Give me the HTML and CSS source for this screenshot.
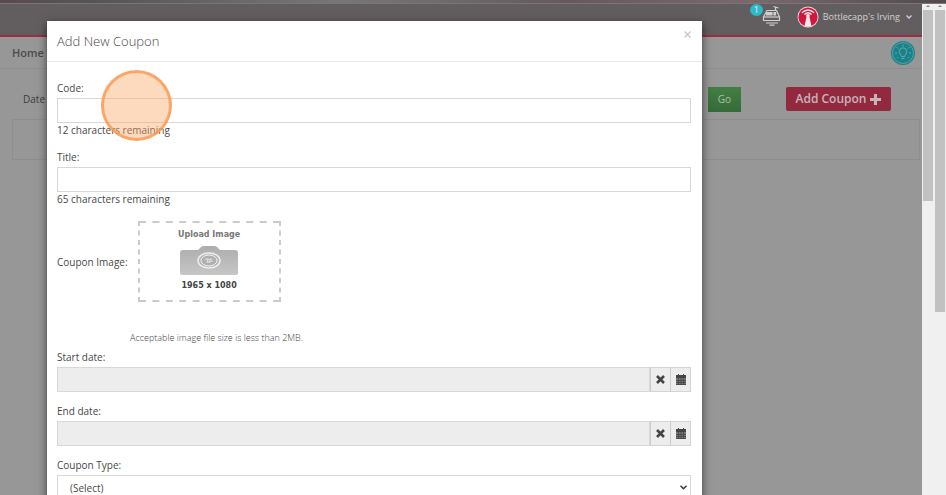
FILE: index.html
```html
<!DOCTYPE html>
<html lang="en">
<head>
<meta charset="utf-8">
<title>Add New Coupon</title>
<link rel="stylesheet" href="styles.css">
</head>
<body>
<div class="strip"></div>
<div class="frame">
  <div class="page">
    <header class="topbar">
      <a class="register" href="#" aria-label="Orders">
        <svg width="20" height="21" viewBox="0 0 20 21" fill="none" stroke="#d2d0d1" stroke-width="1.200">
          <path d="M5 5.500h9.500l3 6.500v3.500H1.500V12z"/><path d="M1.500 12h16"/><path d="M5 7.500h5v2.500H4.500zM12 7.500h1.500v2.500H12z" fill="#d2d0d1"/><path d="M13.500 5V2.500M11.500 1.500l5 1.500"/><path d="M4 18h12M7.500 20.200h5"/>
        </svg>
        <span class="count">1</span>
      </a>
      <a class="account" href="#">
        <svg width="22" height="22" viewBox="0 0 22 22">
          <circle cx="11" cy="11" r="10.500" fill="#dedada"/><circle cx="11" cy="11" r="9.600" fill="#d5163c"/>
          <path d="M9.700 10h2.600l2.200 10q-3.500 1.500-7 0z" fill="#f3e9eb"/><circle cx="11" cy="9.500" r="1.700" fill="#f3e9eb"/>
          <path d="M7.500 8.500q3.500-3.500 7 0M5 6.700q6-5.500 12 0" fill="none" stroke="#f3e9eb" stroke-width="1.400"/>
        </svg>
        <span class="name">Bottlecapp's Irving</span>
        <svg width="6" height="4" viewBox="0 0 6 4" fill="none" stroke="#d2d0d1" stroke-width="1.300"><path d="M.5.5 3 3 5.500.5"/></svg>
      </a>
    </header>
    <nav class="crumbs">
      <a class="home" href="#">Home</a>
      <button class="tip" type="button" aria-label="Tips">
        <svg width="24" height="24" viewBox="0 0 24 24" fill="none" stroke="#6fa6aa">
          <circle cx="12" cy="12" r="12" fill="#18838a" stroke="none"/><circle cx="12" cy="12" r="10.500" stroke-width=".8"/>
          <path d="M10.300 15.500c0-2-2-2.500-2-5a3.700 3.700 0 0 1 7.400 0c0 2.500-2 3-2 5zM10.500 17.500h3M12 3.500v2M5.500 6l1.500 1.500M18.500 6 17 7.500M4 12h2M18 12h2M6 17l1-1M18 17l-1-1"/>
        </svg>
      </button>
    </nav>
    <div class="filters">
      <span class="date">Date</span>
      <button class="go" type="button">Go</button>
      <button class="add" type="button">Add Coupon
        <svg width="11" height="11" viewBox="0 0 11 11"><path d="M4 0h3v4h4v3H7v4H4V7H0V4h4z" fill="#c7b5b9"/></svg>
      </button>
    </div>
    <div class="panel"></div>

    <section class="modal" role="dialog" aria-labelledby="modal-title">
      <div class="modal-head">
        <h1 id="modal-title">Add New Coupon</h1>
        <button class="close" type="button" aria-label="Close">
          <svg width="7" height="7" viewBox="0 0 7 7" stroke="#c4c4c4" stroke-width="1.100"><path d="M.5.5l6 6M6.500.5l-6 6"/></svg>
        </button>
      </div>
      <form class="modal-body">
        <div class="field">
          <label for="code">Code:</label>
          <input class="control" id="code" type="text" maxlength="12">
          <span class="help">12 characters remaining</span>
          <span class="pointer"></span>
        </div>
        <div class="field">
          <label for="title">Title:</label>
          <input class="control" id="title" type="text" maxlength="65">
          <span class="help">65 characters remaining</span>
        </div>
        <div class="image-row">
          <span>Coupon Image:</span>
          <button class="upload" type="button">
            <svg class="dashes" width="143" height="81" viewBox="0 0 143 81" fill="none" stroke="#cbcbcb" stroke-width="2">
              <path d="M1 1h141M1 80h141" stroke-dasharray="7 6.400" stroke-dashoffset="0"/><path d="M1 0v81M142 0v81" stroke-dasharray="5 4.500" stroke-dashoffset="0"/>
            </svg>
            <span class="upload-title">Upload Image</span>
            <svg width="58" height="30" viewBox="0 0 58 30">
              <defs><linearGradient id="cam" x2="0" y2="1"><stop stop-color="#adadad"/><stop offset="1" stop-color="#c6c6c6"/></linearGradient></defs>
              <path d="M3 4h15l3-3q1-1 3-1h10q2 0 3 1l3 3h15q3 0 3 3v20q0 2-3 2H3q-3 0-3-2V7q0-3 3-3z" fill="url(#cam)"/>
              <ellipse cx="29" cy="14.500" rx="11" ry="7.500" fill="#b5b5b5" stroke="#eee" stroke-width="1.500"/>
              <ellipse cx="29" cy="14.500" rx="8" ry="5.500" fill="#b0b0b0" stroke="#f4f4f4" stroke-width="1"/>
              <path d="M25 13l7 1M27 17l1-5M33 15l-6 1M31 12l-2 5" stroke="#eee" stroke-width=".7"/>
            </svg>
            <span class="upload-size">1965 x 1080</span>
          </button>
        </div>
        <p class="hint">Acceptable image file size is less than 2MB.</p>
        <div class="field">
          <label for="start">Start date:</label>
          <div class="date-group">
            <input class="control" id="start" type="text" readonly>
            <button type="button" aria-label="Clear start date"><svg width="9" height="9" viewBox="0 0 9 9" stroke="#444" stroke-width="2.600"><path d="M1 1l7 7M8 1 1 8"/></svg></button>
            <button type="button" aria-label="Pick start date"><svg width="10" height="11" viewBox="0 0 10 11"><path d="M0 1h10v10H0z" fill="#777"/><path d="M0 1h10v3H0zM2 0h1v2H2zM7 0h1v2H7z" fill="#444"/><path d="M0 6.500h10M0 8.500h10M0 10.500h10M2.500 4v7M5 4v7M7.500 4v7" stroke="#444" stroke-width=".8"/></svg></button>
          </div>
        </div>
        <div class="field">
          <label for="end">End date:</label>
          <div class="date-group">
            <input class="control" id="end" type="text" readonly>
            <button type="button" aria-label="Clear end date"><svg width="9" height="9" viewBox="0 0 9 9" stroke="#444" stroke-width="2.600"><path d="M1 1l7 7M8 1 1 8"/></svg></button>
            <button type="button" aria-label="Pick end date"><svg width="10" height="11" viewBox="0 0 10 11"><path d="M0 1h10v10H0z" fill="#777"/><path d="M0 1h10v3H0zM2 0h1v2H2zM7 0h1v2H7z" fill="#444"/><path d="M0 6.500h10M0 8.500h10M0 10.500h10M2.500 4v7M5 4v7M7.500 4v7" stroke="#444" stroke-width=".8"/></svg></button>
          </div>
        </div>
        <div class="field">
          <label for="type">Coupon Type:</label>
          <div class="select-wrap">
            <select class="control" id="type"><option>(Select)</option></select>
            <svg class="caret" width="7" height="5" viewBox="0 0 7 5" fill="none" stroke="#333" stroke-width="1.500"><path d="M.5.700l3 3 3-3"/></svg>
          </div>
        </div>
      </form>
    </section>
  </div>
  <div class="scroll"><i class="arrow"></i><div class="thumb short"></div></div>
  <div class="scroll"><i class="arrow"></i><div class="thumb long"></div></div>
</div>
</body>
</html>
```
FILE: styles.css
```css
* { box-sizing: border-box; }
body {
  margin: 0;
  height: 100vh;
  display: flex;
  flex-direction: column;
  overflow: hidden;
  background: #f0f0f0;
  color: #484848;
  font: 10px/20px "Open Sans", sans-serif;
}
button, input, select { font: inherit; color: inherit; border-radius: 0; margin: 0; }
button { border: 0; padding: 0; background: none; }
a { color: inherit; text-decoration: none; }
svg { display: block; flex: none; }

.strip {
  height: 4px;
  flex: none;
  background: linear-gradient(90deg, #5b4a4d, #555 10%, #777 36%, #65595d 60%, #7a686e 80%, #514a4c);
  border-bottom: 1px solid #77777a;
}
.frame { flex: 1; min-height: 0; display: grid; grid-template-columns: 1fr 12px 12px; }
.page { position: relative; overflow: hidden; background: #979797; }

.topbar {
  height: 33px;
  display: flex;
  justify-content: flex-end;
  gap: 15px;
  padding-right: 10px;
  background: #625e60;
  border-bottom: 2px solid #a02c43;
  color: #d2d0d1;
}
.register { position: relative; padding-top: 1px; }
.count {
  position: absolute;
  left: -12px;
  top: 0;
  width: 13px;
  height: 12px;
  border-radius: 50%;
  background: #2cb9c8;
  color: #e4f4f6;
  font-size: 9px;
  line-height: 12px;
  text-align: center;
}
.account { display: flex; align-items: center; gap: 4px; height: 26px; }
.name { font-size: 9px; margin-right: 2px; }

.crumbs {
  height: 32px;
  display: flex;
  align-items: center;
  justify-content: space-between;
  padding: 0 7px 0 12px;
  border-bottom: 1px solid #8b8e92;
}
.home { font-size: 11px; font-weight: 600; color: #4b4b4b; }
.filters { display: flex; align-items: center; height: 50px; padding: 10px 31px 0 23px; color: #3c3c3c; }
.date { flex: 1; }
.go { width: 33px; height: 25px; background: linear-gradient(#437f45, #356b38); color: #adc0ad; }
.add {
  display: flex;
  align-items: center;
  justify-content: center;
  gap: 4px;
  width: 105px;
  height: 24px;
  margin-left: 45px;
  border-radius: 2px;
  background: #93293f;
  color: #c7b5b9;
  font-size: 12px;
  font-weight: 600;
}
.panel { height: 41px; margin: 0 2px 0 12px; border: 1px solid #8e8e8e; }

.modal {
  position: absolute;
  top: 17px;
  left: 47px;
  right: 220px;
  background: #fff;
  box-shadow: 0 3px 9px rgba(0, 0, 0, .6);
}
.modal-head {
  display: flex;
  justify-content: space-between;
  height: 41px;
  padding: 10px 11px 10px 10px;
  border-bottom: 1px solid #e8e8e8;
}
.modal-head h1 { margin: 0; font-size: 13px; font-weight: 300; line-height: 20px; }
.close { height: 7px; }
.modal-body { padding: 16px 11px 16px 10px; }

.field { position: relative; display: flex; flex-direction: column; margin-bottom: 9px; }
.control {
  width: 100%;
  height: 25px;
  padding: 0 12px;
  border: 1px solid #d8d8d8;
  background: #fff;
  outline: 0;
}
.control[readonly] { background: #ededed; }
.help { line-height: 15px; }
.pointer {
  position: absolute;
  left: 44px;
  top: -8px;
  width: 71px;
  height: 71px;
  border: 3px solid rgba(250, 152, 80, .8);
  border-radius: 50%;
  background: rgba(250, 165, 100, .42);
  pointer-events: none;
}

.image-row { display: flex; align-items: center; gap: 10px; padding-top: 5px; }
.upload {
  position: relative;
  display: flex;
  flex-direction: column;
  align-items: center;
  width: 143px;
  height: 81px;
  padding-top: 6px;
  font-family: "DejaVu Sans", sans-serif;
  font-size: 8px;
  font-weight: 700;
  line-height: 15px;
}
.upload-title { color: #777; line-height: 15px; margin-bottom: 4px; }
.upload-size { color: #444; line-height: 19px; }
.dashes { position: absolute; inset: 0; }
.hint { margin: 27px 0 0 73px; font-size: 9px; font-weight: 300; line-height: 18px; color: #444; }
.date-group { display: flex; }
.date-group .control { flex: 1; min-width: 0; }
.date-group button {
  display: flex;
  align-items: center;
  justify-content: center;
  width: 20px;
  height: 25px;
  border: 1px solid #d4d4d4;
  border-left-color: #ccc;
  border-right: 0;
  background: #ededed;
}
.date-group button:last-child { width: 21px; border-right: 1px solid #d4d4d4; }
.select-wrap { position: relative; }
select.control { appearance: none; display: block; }
.caret { position: absolute; right: 4px; top: 10px; pointer-events: none; }

.scroll { padding: 1px 1px 0; background: #f0f0f0; }
.arrow {
  display: block;
  width: 0;
  margin: 0 auto 3px;
  border: 2px solid transparent;
  border-top: 0;
  border-bottom-color: #888;
}
.thumb { background: #c1c1c1; }
.short { height: 191px; }
.long { height: 302px; }
```
